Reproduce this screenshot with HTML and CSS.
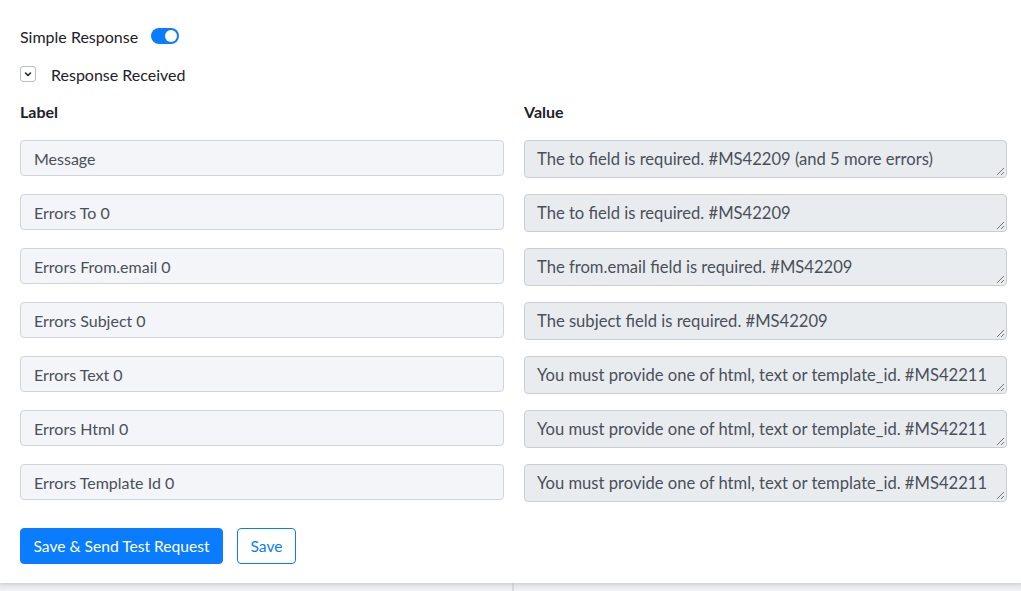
FILE: index.html
```html
<!DOCTYPE html>
<html>
<head>
<meta charset="utf-8">
<link rel="stylesheet" href="styles.css">
</head>
<body>
<div class="card">
  <div class="toggle-row">
    <span class="toggle-label">Simple Response</span>
    <span class="switch"><span class="knob"></span></span>
  </div>
  <div class="collapse-row">
    <span class="chev">
      <svg width="10" height="10" viewBox="0 0 10 10"><path d="M2.5 4 L5 6.5 L7.5 4" fill="none" stroke="#1f2a44" stroke-width="1.6" stroke-linecap="round" stroke-linejoin="round"/></svg>
    </span>
    <span class="collapse-label">Response Received</span>
  </div>
  <div class="grid">
    <div class="head">Label</div>
    <div class="head">Value</div>
    <input class="lbl" value="Message"><div class="val">The to field is required. #MS42209 (and 5 more errors)</div>
    <input class="lbl" value="Errors To 0"><div class="val">The to field is required. #MS42209</div>
    <input class="lbl" value="Errors From.email 0"><div class="val">The from.email field is required. #MS42209</div>
    <input class="lbl" value="Errors Subject 0"><div class="val">The subject field is required. #MS42209</div>
    <input class="lbl" value="Errors Text 0"><div class="val">You must provide one of html, text or template_id. #MS42211</div>
    <input class="lbl" value="Errors Html 0"><div class="val">You must provide one of html, text or template_id. #MS42211</div>
    <input class="lbl" value="Errors Template Id 0"><div class="val">You must provide one of html, text or template_id. #MS42211</div>
  </div>
  <div class="actions">
    <button class="btn primary">Save &amp; Send Test Request</button>
    <button class="btn outline">Save</button>
  </div>
</div>
<div class="below">
  <div class="below-left"></div>
  <div class="below-right"></div>
</div>
</body>
</html>
```
FILE: styles.css
```css
* { box-sizing: border-box; }
html, body { margin: 0; padding: 0; }
body {
  font-family: Lato, "Noto Sans", sans-serif;
  background: #eceef1;
  color: #1d2128;
  width: 1021px;
  height: 591px;
  overflow: hidden;
}
.card {
  background: #fff;
  height: 583px;
  padding: 26px 14px 0 20px;
  box-shadow: 0 1px 4px rgba(0,0,0,0.12);
  position: relative;
  z-index: 1;
}
.toggle-row {
  display: flex;
  align-items: center;
  gap: 13px;
  height: 20px;
}
.toggle-label { font-size: 16px; }
.switch {
  width: 28px;
  height: 16px;
  border-radius: 8px;
  background: #0a7cff;
  position: relative;
  display: inline-block;
}
.knob {
  position: absolute;
  right: 2px;
  top: 2px;
  width: 12px;
  height: 12px;
  border-radius: 50%;
  background: #fff;
}
.collapse-row {
  display: flex;
  align-items: center;
  gap: 15px;
  margin-top: 19px;
  height: 18px;
}
.chev {
  width: 16px;
  height: 16px;
  border: 1px solid #b9bec6;
  border-radius: 3px;
  display: flex;
  align-items: center;
  justify-content: center;
}
.collapse-label { font-size: 16px; }
.grid {
  display: grid;
  grid-template-columns: 484px 483px;
  column-gap: 20px;
  row-gap: 16px;
  margin-top: 19px;
  align-items: start;
}
.head {
  font-weight: 700;
  font-size: 16px;
  height: 18px;
  margin-bottom: 4px;
}
.lbl {
  height: 36px;
  border: 1px solid #d0d5dc;
  border-radius: 4px;
  background: #f3f5f8;
  padding: 0 13px;
  font-family: inherit;
  font-size: 16px;
  color: #4a5059;
  outline: none;
}
.val {
  height: 38px;
  border: 1px solid #c9cdd3;
  border-radius: 4px;
  background: #e9ecef;
  padding: 0 12px;
  font-size: 16.6px;
  color: #4a5059;
  display: flex;
  align-items: center;
  white-space: nowrap;
  overflow: hidden;
  position: relative;
}
.val::after {
  content: "";
  position: absolute;
  right: 2px;
  bottom: 2px;
  width: 7px;
  height: 7px;
  background:
    linear-gradient(135deg, transparent 45%, #777 45%, #777 55%, transparent 55%) ,
    linear-gradient(135deg, transparent 75%, #777 75%, #777 85%, transparent 85%);
}
.actions {
  display: flex;
  gap: 14px;
  margin-top: 26px;
}
.btn {
  height: 36px;
  border-radius: 4px;
  font-family: inherit;
  font-size: 15.6px;
  padding: 0;
  white-space: nowrap;
  cursor: pointer;
}
.primary {
  background: #0a7cff;
  border: 1px solid #0a7cff;
  color: #fff;
  width: 203px;
}
.outline {
  background: #fff;
  border: 1px solid #0a7cff;
  color: #0a7cff;
  width: 59px;
}
.below {
  display: flex;
  height: 8px;
  background: linear-gradient(#e3e6ea, #eff1f4);
}
.below-left { width: 514px; border-right: 2px solid #d6d9dd; }
.below-right { flex: 1; }
```
